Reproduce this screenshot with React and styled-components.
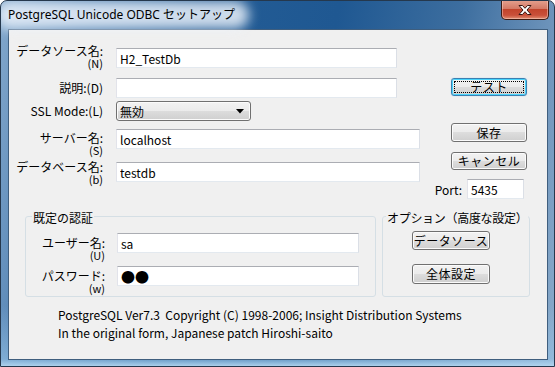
import React from "react";
import styled, { createGlobalStyle } from "styled-components";

const GlobalStyle = createGlobalStyle`
  html, body {
    margin: 0;
    padding: 0;
    background: #ffffff;
  }
  body {
    font-family: "Noto Sans CJK JP", "Noto Sans", sans-serif;
    font-size: 12px;
    color: #000;
  }
`;

const Window = styled.div`
  box-sizing: border-box;
  width: 555px;
  height: 367px;
  display: flex;
  flex-direction: column;
  border: 1px solid #25384d;
  border-radius: 7px 7px 0 0;
  overflow: hidden;
  background:
    linear-gradient(to top, rgba(178, 214, 240, 0.95) 0, rgba(150, 195, 230, 0.6) 7px, rgba(150, 195, 230, 0) 60px),
    linear-gradient(100deg, #83a8cc 0%, #4f80b2 14%, #235c95 34%, #1f5892 55%, #3d6e9f 75%, #7499bf 92%, #8aabcb 100%);
`;

const TitleBar = styled.div`
  height: 28px;
  display: flex;
  justify-content: space-between;
  align-items: flex-start;
  padding: 0 5px 0 7px;
`;

const TitleText = styled.div`
  position: relative;
  margin-top: 6px;
  font-family: "Noto Sans", "Noto Sans CJK JP", sans-serif;
  font-size: 12px;
  line-height: 16px;
  color: #000;
  white-space: nowrap;
  &::before {
    content: "";
    position: absolute;
    inset: -6px -14px -6px -12px;
    background: rgba(235, 242, 250, 0.85);
    border-radius: 14px;
    filter: blur(6px);
    z-index: 0;
  }
  span {
    position: relative;
  }
`;

const CloseButton = styled.div`
  box-sizing: border-box;
  width: 48px;
  height: 20px;
  margin-top: -1px;
  display: flex;
  align-items: center;
  justify-content: center;
  border: 1px solid #3b1b14;
  border-top: none;
  border-radius: 0 0 5px 5px;
  background: linear-gradient(#e5a290 0%, #d47a66 45%, #c2442c 50%, #c9503a 80%, #e08f73 100%);
  box-shadow: inset 0 0 0 1px rgba(255, 220, 210, 0.45);
`;

const Client = styled.div`
  flex: 1;
  margin: 0 6px 6px 7px;
  border: 1px solid #3f5e7e;
  background: #f0f0f0;
  display: flex;
  flex-direction: column;
`;

const TopSection = styled.div`
  display: flex;
  padding-top: 18px;
`;

const Form = styled.div`
  width: 411px;
  display: flex;
  flex-direction: column;
`;

const Row = styled.div`
  display: flex;
  align-items: flex-start;
  height: 20px;
  margin-top: ${(p) => p.$mt || 0}px;
`;

const Label = styled.div`
  flex: none;
  width: ${(p) => p.$w || 94}px;
  margin-right: ${(p) => p.$gap || 13}px;
  margin-top: ${(p) => p.$dy || 0}px;
  text-align: right;
  font-size: 12px;
  line-height: ${(p) => (p.$single ? 20 : 13)}px;
  white-space: nowrap;
  small {
    display: block;
    font-size: 11px;
    line-height: 12px;
  }
`;

const TextBox = styled.input`
  box-sizing: border-box;
  width: ${(p) => p.$w}px;
  height: 20px;
  margin: 0;
  padding: 0 0 0 3px;
  background: #fff;
  border: 1px solid;
  border-color: #abadb3 #dbdfe6 #e3e9ef #e2e3ea;
  font-family: "Noto Sans CJK JP", sans-serif;
  font-size: ${(p) => (p.$big ? 14 : 12)}px;
  color: #000;
  outline: none;
`;

const Select = styled.div`
  box-sizing: border-box;
  width: ${(p) => p.$w}px;
  height: 20px;
  display: flex;
  align-items: center;
  justify-content: space-between;
  padding: 0 6px 0 3px;
  border: 1px solid #707070;
  border-radius: 3px;
  background: linear-gradient(#f2f2f2 0%, #ebebeb 50%, #dddddd 50%, #cfcfcf 100%);
  box-shadow: inset 0 0 0 1px #fbfbfb;
  font-size: 12px;
`;

const RightCol = styled.div`
  width: 98px;
  margin-left: 9px;
  display: flex;
  flex-direction: column;
  align-items: flex-end;
`;

const Button = styled.div`
  position: relative;
  box-sizing: border-box;
  flex: none;
  width: ${(p) => p.$w || 76}px;
  height: ${(p) => p.$h || 19}px;
  margin-top: ${(p) => p.$mt || 0}px;
  display: flex;
  align-items: center;
  justify-content: center;
  border: 1px solid ${(p) => (p.$focused ? "#3c7fb1" : "#707070")};
  border-radius: 3px;
  background: linear-gradient(#f2f2f2 0%, #ebebeb 50%, #dddddd 50%, #cfcfcf 100%);
  box-shadow: ${(p) =>
    p.$focused
      ? "inset 0 0 0 1px #48d5fd, 0 0 1px #6cc6f2"
      : "inset 0 0 0 1px #fbfbfb"};
  font-size: 12px;
  line-height: 14px;
  letter-spacing: 0.5px;
  &::after {
    content: "";
    display: ${(p) => (p.$focused ? "block" : "none")};
    position: absolute;
    inset: 2px;
    border: 1px dotted #000;
  }
`;

const PortRow = styled.div`
  display: flex;
  align-items: center;
  margin-top: 9px;
  margin-right: 3px;
  gap: 5px;
  font-size: 12px;
`;

const Groups = styled.div`
  display: flex;
  gap: 6px;
  margin: 8px 0 0 16px;
`;

const Group = styled.fieldset`
  box-sizing: border-box;
  width: ${(p) => p.$w}px;
  height: 90px;
  margin: 0;
  padding: 0 0 0 ${(p) => p.$pl || 0}px;
  border: 1px solid #d5dfe5;
  border-radius: 3px;
  display: flex;
  flex-direction: column;
  align-items: flex-start;
`;

const Legend = styled.legend`
  margin-left: ${(p) => p.$ml}px;
  padding: 4px 1px 0;
  font-size: 12px;
  line-height: 14px;
  letter-spacing: ${(p) => p.$ls || 0}px;
`;

const Footer = styled.div`
  margin-top: 9px;
  padding-left: 49px;
  font-size: 12px;
  line-height: 18px;
  white-space: pre;
`;

const CloseGlyph = () => (
  <svg width="14" height="10" viewBox="0 0 14 10">
    <path
      d="M1 0.5 H4.5 L7 3.3 L9.5 0.5 H13 L9 5 L13 9.5 H9.5 L7 6.7 L4.5 9.5 H1 L5 5 Z"
      fill="#ffffff"
      stroke="#3a1610"
      strokeWidth="1"
      strokeLinejoin="round"
    />
  </svg>
);

const Arrow = () => (
  <svg width="8" height="5" viewBox="0 0 8 5">
    <path d="M0 0 H8 L4 4.5 Z" fill="#000" />
  </svg>
);

export default function App() {
  return (
    <>
      <GlobalStyle />
      <Window>
        <TitleBar>
          <TitleText>
            <span>PostgreSQL Unicode ODBC セットアップ</span>
          </TitleText>
          <CloseButton>
            <CloseGlyph />
          </CloseButton>
        </TitleBar>
        <Client>
          <TopSection>
            <Form>
              <Row>
                <Label $dy={-4}>
                  データソース名:
                  <small>(N)</small>
                </Label>
                <TextBox $w={281} readOnly value="H2_TestDb" />
              </Row>
              <Row $mt={10}>
                <Label $single>説明:(D)</Label>
                <TextBox $w={281} readOnly value="" />
              </Row>
              <Row $mt={3}>
                <Label $single>SSL Mode:(L)</Label>
                <Select $w={135}>
                  <span>無効</span>
                  <Arrow />
                </Select>
              </Row>
              <Row $mt={8}>
                <Label $dy={2}>
                  サーバー名:
                  <small>(S)</small>
                </Label>
                <TextBox $w={304} readOnly value="localhost" />
              </Row>
              <Row $mt={13}>
                <Label $dy={-2}>
                  データベース名:
                  <small>(b)</small>
                </Label>
                <TextBox $w={304} readOnly value="testdb" />
              </Row>
            </Form>
            <RightCol>
              <Button $focused $mt={30} $h={18}>
                テスト
              </Button>
              <Button $mt={27} $h={19}>
                保存
              </Button>
              <Button $mt={10} $h={18}>
                キャンセル
              </Button>
              <PortRow>
                Port:
                <TextBox $w={57} readOnly value="5435" />
              </PortRow>
            </RightCol>
          </TopSection>
          <Groups>
            <Group $w={351}>
              <Legend $ml={6}>既定の認証</Legend>
              <Row $mt={8}>
                <Label $w={79} $gap={12} $dy={3}>
                  ユーザー名:
                  <small>(U)</small>
                </Label>
                <TextBox $w={242} readOnly value="sa" />
              </Row>
              <Row $mt={13}>
                <Label $w={79} $gap={12} $dy={3}>
                  パスワード:
                  <small>(w)</small>
                </Label>
                <TextBox $w={242} $big readOnly value="●●" />
              </Row>
            </Group>
            <Group $w={148} $pl={29}>
              <Legend $ml={-26} $ls={-0.3}>
                オプション（高度な設定）
              </Legend>
              <Button $w={78} $mt={6}>
                データソース
              </Button>
              <Button $w={78} $mt={14} $h={20}>
                全体設定
              </Button>
            </Group>
          </Groups>
          <Footer>
            {"PostgreSQL Ver7.3  Copyright (C) 1998-2006; Insight Distribution Systems\nIn the original form, Japanese patch Hiroshi-saito"}
          </Footer>
        </Client>
      </Window>
    </>
  );
}
